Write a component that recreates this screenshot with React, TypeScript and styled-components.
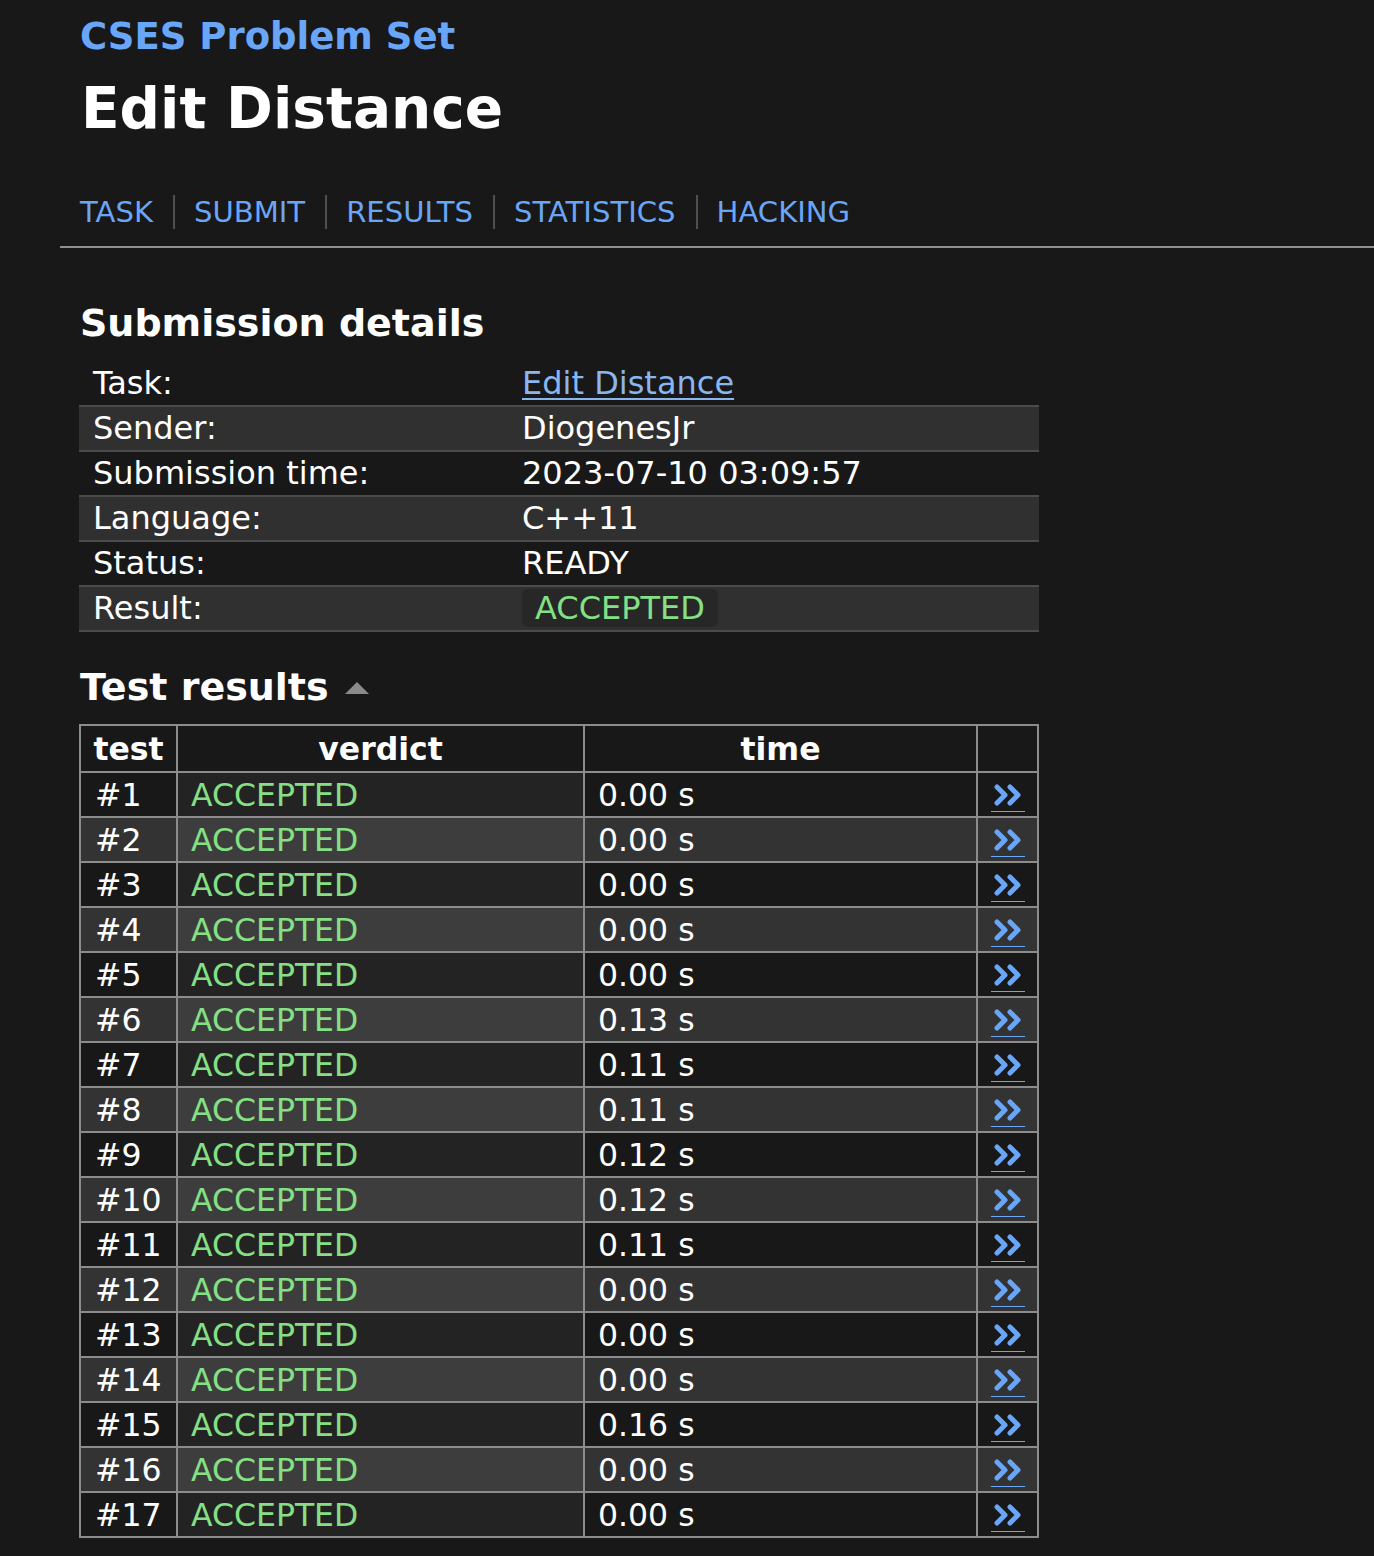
import React from "react";
import styled, { createGlobalStyle } from "styled-components";

const Global = createGlobalStyle`
  html, body { margin: 0; padding: 0; background: #181818; }
  body { font-family: "DejaVu Sans", Verdana, sans-serif; color: #ffffff; }
`;

const Page = styled.div`
  margin-left: 60px;
  padding-bottom: 16px;
`;

const Header = styled.header`
  padding: 14px 20px 0 20px;
`;

const SiteTitle = styled.a`
  display: block;
  font-weight: bold;
  font-size: 37px;
  line-height: 46px;
  color: #6aa6f8;
  text-decoration: none;
`;

const PageTitle = styled.h1`
  margin: 16px 0 0 1px;
  font-size: 56.5px;
  line-height: 66px;
  font-weight: bold;
  color: #ffffff;
`;

const Nav = styled.nav`
  display: flex;
  align-items: center;
  margin-top: 53px;
  height: 34px;
`;

const NavLink = styled.a<{ $first?: boolean }>`
  font-size: 29.1px;
  line-height: 34px;
  color: #6aa6f8;
  text-decoration: none;
  padding: 0 20px 0 19px;
  ${(p) => (p.$first ? "padding-left: 0;" : "border-left: 2px solid #4f4f4f;")}
`;

const Rule = styled.hr`
  margin: 17px 0 0 0;
  border: none;
  border-top: 2px solid #8f8f8f;
  height: 0;
`;

const Content = styled.main`
  padding: 0 20px;
`;

const SectionTitle = styled.h2<{ $top: number }>`
  display: flex;
  align-items: center;
  gap: 16px;
  margin: ${(p) => p.$top}px 0 0 0;
  font-size: 38px;
  line-height: 46px;
  font-weight: bold;
`;

const SortArrow = styled.span`
  width: 0;
  height: 0;
  border-left: 12px solid transparent;
  border-right: 12px solid transparent;
  border-bottom: 12px solid #8a8a8a;
  margin-top: 2px;
`;

const DetailsTable = styled.table`
  margin-top: 15px;
  margin-left: -1px;
  width: 960px;
  border-collapse: collapse;
  font-size: 32px;
`;

const DetailRow = styled.tr<{ $alt: boolean }>`
  height: 45px;
  background: ${(p) => (p.$alt ? "#303030" : "transparent")};
  ${(p) => (p.$alt ? "border-top: 2px solid #4b4b4b; border-bottom: 2px solid #4b4b4b;" : "")}
`;

const DetailLabel = styled.td`
  width: 429px;
  padding: 0 0 0 14px;
  vertical-align: middle;
  line-height: 41px;
`;

const DetailValue = styled.td`
  padding: 0;
  vertical-align: middle;
  line-height: 41px;
`;

const TaskLink = styled.a`
  color: #8ab6ef;
  text-decoration: underline;
  text-underline-offset: 4px;
  text-decoration-thickness: 2px;
`;

const Badge = styled.span`
  display: inline-block;
  background: #272727;
  border-radius: 6px;
  padding: 0 13px;
  line-height: 38px;
  color: #85e085;
`;

const ResultsTable = styled.table`
  margin-top: 14px;
  margin-left: -1px;
  width: 960px;
  border-collapse: collapse;
  border: 2px solid #8c8c8c;
  font-size: 31.5px;
`;

const HeadCell = styled.th<{ $w?: number }>`
  ${(p) => (p.$w ? `width: ${p.$w}px;` : "")}
  height: 45px;
  padding: 0;
  border: 2px solid #8c8c8c;
  font-weight: bold;
  text-align: center;
  line-height: 40px;
  background: #181818;
`;

const ResultRow = styled.tr<{ $alt: boolean }>`
  height: 45px;
  background: ${(p) => (p.$alt ? "#333333" : "#181818")};
`;

const Cell = styled.td<{ $verdict?: boolean; $center?: boolean }>`
  padding: 0 0 0 13px;
  border: 2px solid #8c8c8c;
  line-height: 40px;
  vertical-align: middle;
  ${(p) => (p.$verdict ? "color: #85e085; background: rgba(255,255,255,0.05);" : "")}
  ${(p) => (p.$center ? "padding: 0; text-align: center;" : "")}
`;

const TestCell = styled(Cell)`
  padding-left: 14px;
`;

const DetailsLink = styled.a`
  display: inline-flex;
  padding-bottom: 4px;
  border-bottom: 1.5px solid #6aa6f8;
  vertical-align: middle;
  margin-top: 2px;
`;

const Chevrons = () => (
  <svg width="34" height="24" viewBox="0 0 34 24">
    <path
      d="M6 4 L14 12 L6 20 M19 4 L27 12 L19 20"
      fill="none"
      stroke="#6aa6f8"
      strokeWidth="5"
      strokeLinecap="round"
      strokeLinejoin="round"
    />
  </svg>
);

const details: [string, React.ReactNode][] = [
  ["Task:", <TaskLink href="#">Edit Distance</TaskLink>],
  ["Sender:", "DiogenesJr"],
  ["Submission time:", "2023-07-10 03:09:57"],
  ["Language:", "C++11"],
  ["Status:", "READY"],
  ["Result:", <Badge>ACCEPTED</Badge>],
];

const times = [
  "0.00", "0.00", "0.00", "0.00", "0.00", "0.13", "0.11", "0.11", "0.12",
  "0.12", "0.11", "0.00", "0.00", "0.00", "0.16", "0.00", "0.00",
];

export default function App() {
  return (
    <>
      <Global />
      <Page>
        <Header>
          <SiteTitle href="#">CSES Problem Set</SiteTitle>
          <PageTitle>Edit Distance</PageTitle>
          <Nav>
            <NavLink $first href="#">TASK</NavLink>
            <NavLink href="#">SUBMIT</NavLink>
            <NavLink href="#">RESULTS</NavLink>
            <NavLink href="#">STATISTICS</NavLink>
            <NavLink href="#">HACKING</NavLink>
          </Nav>
        </Header>
        <Rule />
        <Content>
          <SectionTitle $top={52}>Submission details</SectionTitle>
          <DetailsTable>
            <tbody>
              {details.map(([k, v], i) => (
                <DetailRow key={k} $alt={i % 2 === 1}>
                  <DetailLabel>{k}</DetailLabel>
                  <DetailValue>{v}</DetailValue>
                </DetailRow>
              ))}
            </tbody>
          </DetailsTable>
          <SectionTitle $top={32}>
            Test results
            <SortArrow />
          </SectionTitle>
          <ResultsTable>
            <thead>
              <tr>
                <HeadCell $w={95}>test</HeadCell>
                <HeadCell $w={405}>verdict</HeadCell>
                <HeadCell $w={391}>time</HeadCell>
                <HeadCell />
              </tr>
            </thead>
            <tbody>
              {times.map((t, i) => (
                <ResultRow key={i} $alt={i % 2 === 1}>
                  <TestCell>#{i + 1}</TestCell>
                  <Cell $verdict>ACCEPTED</Cell>
                  <Cell>{t} s</Cell>
                  <Cell $center>
                    <DetailsLink href="#">
                      <Chevrons />
                    </DetailsLink>
                  </Cell>
                </ResultRow>
              ))}
            </tbody>
          </ResultsTable>
        </Content>
      </Page>
    </>
  );
}
